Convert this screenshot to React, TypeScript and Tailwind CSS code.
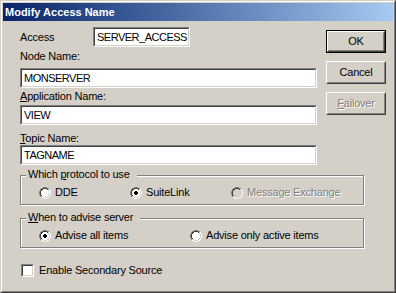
import React from "react";

const RADIO = [
  "....OOOO....",
  "..OOIIIIOO..",
  ".OIIFFFFIIO.",
  ".OIFFFFFFIO.",
  "OIFFFDDFFFIO",
  "OIFFDDDDFFIO",
  "OIFFDDDDFFIO",
  "OIFFFDDFFFIO",
  ".OIFFFFFFIO.",
  ".OIIFFFFIIO.",
  "..OOIIIIOO..",
  "....OOOO....",
];

function Radio({ checked = false, disabled = false }: { checked?: boolean; disabled?: boolean }) {
  const rects: React.ReactElement[] = [];
  RADIO.forEach((row, r) =>
    row.split("").forEach((ch, c) => {
      if (ch === ".") return;
      const dark = r + c <= 10;
      let fill = "#fff";
      if (ch === "O") fill = dark ? "#808080" : "#ffffff";
      else if (ch === "I") fill = dark ? "#404040" : "#D4D0C8";
      else if (ch === "F") fill = disabled ? "#D4D0C8" : "#ffffff";
      else if (ch === "D") fill = checked ? "#000000" : disabled ? "#D4D0C8" : "#ffffff";
      rects.push(<rect key={`${r}-${c}`} x={c} y={r} width={1} height={1} fill={fill} />);
    })
  );
  return (
    <svg width={12} height={12} viewBox="0 0 12 12" shapeRendering="crispEdges" className="shrink-0">
      {rects}
    </svg>
  );
}

function Sunken({ className, children }: { className: string; children?: React.ReactNode }) {
  return (
    <div className={`border border-t-[#808080] border-l-[#808080] border-b-white border-r-white ${className}`}>
      <div className="h-full border border-t-[#404040] border-l-[#404040] border-b-[#D4D0C8] border-r-[#D4D0C8] bg-white flex items-center pl-[2px] overflow-hidden whitespace-nowrap tracking-[-0.5px]">
        {children}
      </div>
    </div>
  );
}

function Button({ children, isDefault = false }: { children: React.ReactNode; isDefault?: boolean }) {
  const body = (
    <div className="h-full border border-t-white border-l-white border-b-[#404040] border-r-[#404040]">
      <div className="h-full border border-t-[#D4D0C8] border-l-[#D4D0C8] border-b-[#808080] border-r-[#808080] flex items-center justify-center">
        {children}
      </div>
    </div>
  );
  if (isDefault) {
    return <div className="w-[60px] h-[23px] border border-black">{body}</div>;
  }
  return <div className="w-[60px] h-[23px]">{body}</div>;
}

function U({ children }: { children: React.ReactNode }) {
  return <span className="underline decoration-1 underline-offset-[1px]">{children}</span>;
}

function Group({ legend, children }: { legend: React.ReactNode; children: React.ReactNode }) {
  return (
    <div className="relative w-[344px] h-[30px] border border-[#808080] shadow-[inset_1px_1px_0_#fff,1px_1px_0_#fff]">
      <div className="absolute top-[-8px] left-[5px] bg-[#D4D0C8] pl-[2px] pr-[7px] leading-[13px] whitespace-nowrap">
        {legend}
      </div>
      <div className="pt-[10px] pl-[18px] flex items-center h-[23px]">{children}</div>
    </div>
  );
}

function Option({
  label,
  checked,
  disabled,
  className,
}: {
  label: string;
  checked?: boolean;
  disabled?: boolean;
  className: string;
}) {
  return (
    <div className={`flex items-center h-[12px] ${className}`}>
      <Radio checked={checked} disabled={disabled} />
      <span
        className={
          disabled
            ? "ml-[4px] whitespace-nowrap text-[#808080] [text-shadow:1px_1px_0_#fff]"
            : "ml-[4px] whitespace-nowrap"
        }
      >
        {label}
      </span>
    </div>
  );
}

export default function App() {
  return (
    <div className="w-[396px] h-[293px] bg-[#D4D0C8] font-['Liberation_Sans',Arial,sans-serif] text-[11px] leading-[13px] text-black tracking-[-0.2px]">
      <div className="w-full h-full border border-t-[#D4D0C8] border-l-[#D4D0C8] border-b-[#404040] border-r-[#404040]">
        <div className="h-full border border-t-white border-l-white border-b-[#808080] border-r-[#808080] p-px flex flex-col">
          <div className="h-[18px] shrink-0 bg-gradient-to-r from-[#0A246A] to-[#A6CAF0] flex items-center pl-[2px] text-white font-bold tracking-normal">
            Modify Access Name
          </div>
          <div className="flex flex-col pl-[17px]">
            <div className="flex">
              <div className="w-[297px] flex flex-col">
                <div className="mt-[6px] flex items-center h-[20px]">
                  <div className="w-[73px]">Access</div>
                  <Sunken className="w-[97px] h-[20px]">SERVER_ACCESS</Sunken>
                </div>
                <div className="mt-[3px] h-[13px]">Node Name:</div>
                <Sunken className="mt-[5px] w-[297px] h-[20px]">MONSERVER</Sunken>
                <div className="mt-[2px] h-[13px]">
                  <U>A</U>pplication Name:
                </div>
                <Sunken className="mt-[2px] w-[297px] h-[20px]">VIEW</Sunken>
                <div className="mt-[7px] h-[13px]">
                  <U>T</U>opic Name:
                </div>
                <Sunken className="w-[297px] h-[20px]">TAGNAME</Sunken>
              </div>
              <div className="ml-[9px] mt-[9px] flex flex-col gap-[8px]">
                <Button isDefault>OK</Button>
                <Button>Cancel</Button>
                <Button>
                  <span className="text-[#808080] [text-shadow:1px_1px_0_#fff]">
                    <U>F</U>ailover
                  </span>
                </Button>
              </div>
            </div>
            <div className="mt-[10px]">
              <Group
                legend={
                  <>
                    Which <U>p</U>rotocol to use
                  </>
                }
              >
                <Option label="DDE" className="w-[91px]" />
                <Option label="SuiteLink" checked className="w-[101px]" />
                <Option label="Message Exchange" disabled className="w-[120px]" />
              </Group>
            </div>
            <div className="mt-[13px]">
              <Group
                legend={
                  <>
                    <U>W</U>hen to advise server
                  </>
                }
              >
                <Option label="Advise all items" checked className="w-[151px]" />
                <Option label="Advise only active items" className="w-[160px]" />
              </Group>
            </div>
            <div className="mt-[16px] ml-[1px] flex items-center">
              <div className="w-[13px] h-[13px] border border-t-[#808080] border-l-[#808080] border-b-white border-r-white">
                <div className="h-full border border-t-[#404040] border-l-[#404040] border-b-[#D4D0C8] border-r-[#D4D0C8] bg-white" />
              </div>
              <span className="ml-[5px]">Enable Secondary Source</span>
            </div>
          </div>
        </div>
      </div>
    </div>
  );
}
